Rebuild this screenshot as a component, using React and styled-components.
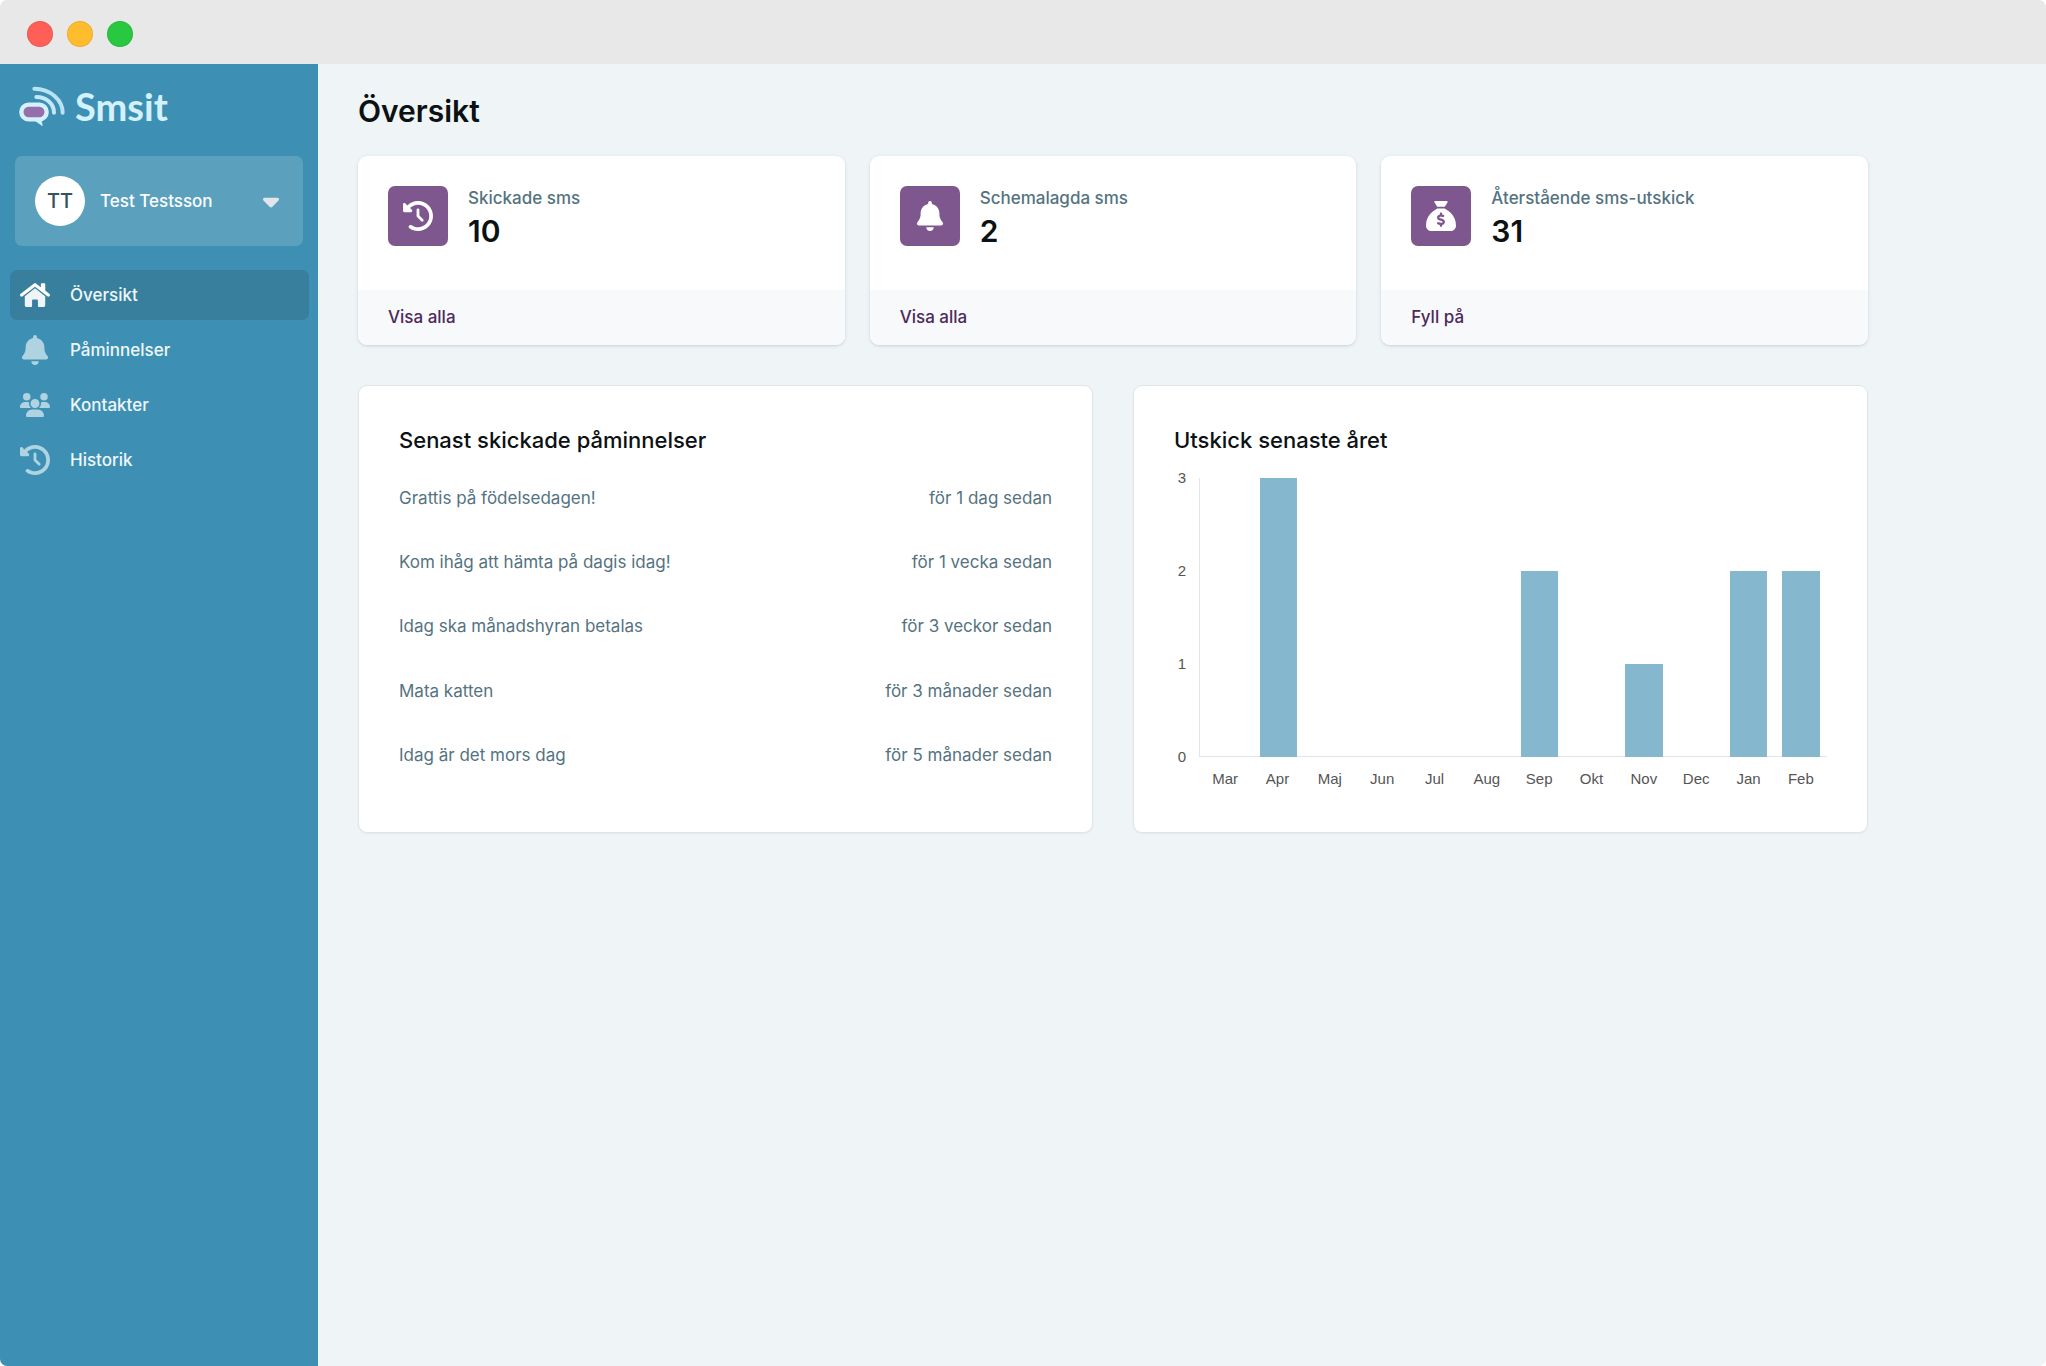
import React from "react";
import styled, { createGlobalStyle } from "styled-components";
import {
  FaBell,
  FaCaretDown,
  FaClockRotateLeft,
  FaSackDollar,
  FaUsers,
} from "react-icons/fa6";

const color = {
  chrome: "#e8e8e8",
  sidebar: "#3d90b3",
  sidebarActive: "#377f9d",
  account: "#5ba1be",
  page: "#eff4f7",
  purple: "#7f578f",
  link: "#4c2a5c",
  muted: "#54737f",
  heading: "#0c1113",
  bar: "#85b8ce",
  line: "#e0e5e9",
};

const GlobalStyle = createGlobalStyle`
  *, *::before, *::after { box-sizing: border-box; }
  body {
    margin: 0;
    background: #fff;
    font-family: Inter, "Liberation Sans", sans-serif;
    font-size: 17px;
    line-height: 25px;
  }
  h1, h2, p, ul, dl, dd { margin: 0; padding: 0; }
  ul { list-style: none; }
  a { color: inherit; text-decoration: none; }
  button { font: inherit; color: inherit; border: 0; cursor: pointer; }
`;

const Window = styled.div`
  display: flex;
  flex-direction: column;
  min-height: 100vh;
  border-radius: 7px;
  overflow: hidden;
`;

const TitleBar = styled.div`
  display: flex;
  gap: 15px;
  height: 64px;
  padding: 21px 27px 0;
  background: ${color.chrome};
`;

const WindowDot = styled.span`
  width: 26px;
  height: 26px;
  margin-right: -1px;
  border-radius: 50%;
  background: ${(p) => p.$color};
  box-shadow: inset 0 0 0 1px rgba(0, 0, 0, 0.08);
`;

const Body = styled.div`
  display: flex;
  flex: 1;
`;

const Sidebar = styled.aside`
  flex: none;
  width: 318px;
  background: ${color.sidebar};
  color: #eff7fa;
  font-weight: 500;
`;

const Brand = styled.a`
  display: flex;
  align-items: center;
  gap: 10px;
  height: 92px;
  padding: 0 19px 8px;
  color: #d3f1fe;
  font-family: Lato, "Open Sans", sans-serif;
  font-size: 38px;
  font-weight: 700;
  line-height: 40px;
`;

const Account = styled.button`
  display: flex;
  align-items: center;
  gap: 15px;
  width: calc(100% - 30px);
  height: 90px;
  margin: 0 15px;
  padding: 0 24px 0 20px;
  border-radius: 7px;
  background: ${color.account};
  && {
    color: #fff;
  }
  text-align: left;
`;

const Avatar = styled.span`
  display: grid;
  place-items: center;
  width: 50px;
  height: 50px;
  border-radius: 50%;
  background: #fff;
  color: #36525f;
  font-size: 20px;
`;

const AccountName = styled.span`
  flex: 1;
`;

const Caret = styled(FaCaretDown)`
  width: 16px;
  height: 26px;
  color: #e0e6ea;
`;

const NavList = styled.ul`
  display: grid;
  gap: 5px;
  padding: 24px 9px 24px 10px;
`;

const NavLink = styled.a`
  display: flex;
  align-items: center;
  gap: 20px;
  height: 50px;
  padding: 0 10px;
  border-radius: 7px;
  background: ${(p) => (p.$active ? color.sidebarActive : "transparent")};

  svg {
    width: 30px;
    height: 30px;
    color: ${(p) => (p.$active ? "#fff" : "#b0d3e1")};
  }
`;

const Main = styled.main`
  flex: 1;
  padding: 27px 40px 40px;
  background: ${color.page};
`;

const Content = styled.div`
  max-width: 1510px;
`;

const PageTitle = styled.h1`
  margin-bottom: 25px;
  color: ${color.heading};
  font-size: 30px;
  font-weight: 600;
  line-height: 40px;
`;

const StatGrid = styled.div`
  display: grid;
  grid-template-columns: repeat(3, 1fr);
  gap: 25px;
  margin-bottom: 40px;
`;

const StatCard = styled.section`
  border-radius: 9px;
  overflow: hidden;
  background: #fff;
  box-shadow: 0 1px 4px rgba(20, 50, 60, 0.1), 0 1px 2px rgba(20, 50, 60, 0.08);
`;

const StatBody = styled.div`
  display: flex;
  gap: 20px;
  padding: 30px 30px 39px;
`;

const StatIcon = styled.span`
  display: grid;
  place-items: center;
  width: 60px;
  height: 60px;
  border-radius: 7px;
  background: ${color.purple};
  color: #fff;

  svg {
    width: 30px;
    height: 30px;
  }
`;

const StatLabel = styled.dt`
  color: ${color.muted};
  font-weight: 500;
`;

const StatValue = styled.dd`
  color: ${color.heading};
  font-size: 30px;
  font-weight: 600;
  line-height: 40px;
`;

const StatFooter = styled.div`
  padding: 15px 30px;
  background: #f8f9fb;
  color: ${color.link};
  font-weight: 500;
`;

const PanelGrid = styled.div`
  display: grid;
  grid-template-columns: repeat(2, 1fr);
  gap: 40px;
`;

const Panel = styled.section`
  display: flex;
  flex-direction: column;
  padding: 40px 40px 44px;
  border: 1px solid ${color.line};
  border-radius: 9px;
  background: #fff;
  box-shadow: 0 1px 2px rgba(20, 50, 60, 0.05);
`;

const PanelTitle = styled.h2`
  color: ${color.heading};
  font-size: 22px;
  font-weight: 500;
  line-height: 28px;
`;

const ReminderList = styled.ul`
  display: grid;
  flex: 1;
  grid-auto-rows: 1fr;
  margin-top: 12px;
  color: ${color.muted};
`;

const Reminder = styled.li`
  display: flex;
  align-items: center;
  justify-content: space-between;
  gap: 20px;
`;

const Chart = styled.div`
  display: grid;
  grid-template-columns: 12px 1fr;
  column-gap: 13px;
  row-gap: 13px;
  margin-top: 24px;
  color: #555;
  font-family: "Liberation Sans", Arial, sans-serif;
  font-size: 15px;
  line-height: 18px;
`;

const YAxis = styled.div`
  display: flex;
  flex-direction: column;
  justify-content: space-between;
  margin: -9px 0;
  text-align: right;
`;

const Plot = styled.div`
  display: grid;
  grid-template-columns: repeat(12, 1fr);
  align-items: end;
  justify-items: center;
  height: 279px;
  border-left: 1px solid ${color.line};
  box-shadow: inset 0 -1px ${color.line};
`;

const Bar = styled.div`
  width: 72%;
  background: ${color.bar};
`;

const XAxis = styled.div`
  display: grid;
  grid-column: 2;
  grid-template-columns: repeat(12, 1fr);
  text-align: center;
`;

function BrandMark() {
  return (
    <svg width="46" height="40" viewBox="0 0 138 120" fill="none" aria-hidden="true">
      <path d="M46 8C94 8 131 42 131 80" stroke="#b9e2f3" strokeWidth="12" strokeLinecap="round" />
      <path d="M52 33C82 33 105 53 105 80" stroke="#c3e8f7" strokeWidth="12" strokeLinecap="round" />
      <path d="M40 98L66 98L70 119Z" fill="#d3f1fe" stroke="#d3f1fe" strokeWidth="2" strokeLinejoin="round" />
      <rect x="7" y="56" width="76" height="44" rx="22" fill="#956fa9" stroke="#d3f1fe" strokeWidth="13" />
    </svg>
  );
}

function HouseIcon() {
  return (
    <svg viewBox="0 0 576 512" fill="currentColor" aria-hidden="true">
      <path d="M401 150V46q0-18 18-18h48q18 0 18 18v170Z" />
      <path
        d="M32 258L288 58L544 258"
        fill="none"
        stroke="currentColor"
        strokeWidth="60"
        strokeLinecap="round"
        strokeLinejoin="round"
      />
      <path
        opacity="0.92"
        d="M288 126L484 280V456q0 28-28 28H362q-18 0-18-18V362q0-22-22-22H254q-22 0-22 22V466q0 18-18 18H120q-28 0-28-28V280Z"
      />
    </svg>
  );
}

const navItems = [
  { label: "Översikt", Icon: HouseIcon, active: true },
  { label: "Påminnelser", Icon: FaBell },
  { label: "Kontakter", Icon: FaUsers },
  { label: "Historik", Icon: FaClockRotateLeft },
];

const stats = [
  { label: "Skickade sms", value: 10, action: "Visa alla", Icon: FaClockRotateLeft },
  { label: "Schemalagda sms", value: 2, action: "Visa alla", Icon: FaBell },
  { label: "Återstående sms-utskick", value: 31, action: "Fyll på", Icon: FaSackDollar },
];

const reminders = [
  ["Grattis på födelsedagen!", "för 1 dag sedan"],
  ["Kom ihåg att hämta på dagis idag!", "för 1 vecka sedan"],
  ["Idag ska månadshyran betalas", "för 3 veckor sedan"],
  ["Mata katten", "för 3 månader sedan"],
  ["Idag är det mors dag", "för 5 månader sedan"],
];

const months = [
  ["Mar", 0],
  ["Apr", 3],
  ["Maj", 0],
  ["Jun", 0],
  ["Jul", 0],
  ["Aug", 0],
  ["Sep", 2],
  ["Okt", 0],
  ["Nov", 1],
  ["Dec", 0],
  ["Jan", 2],
  ["Feb", 2],
];

const maxCount = 3;

export default function App() {
  return (
    <>
      <GlobalStyle />
      <Window>
        <TitleBar>
          <WindowDot $color="#ff5f57" />
          <WindowDot $color="#ffbd2e" />
          <WindowDot $color="#28c840" />
        </TitleBar>
        <Body>
          <Sidebar>
            <Brand href="#">
              <BrandMark />
              <span>Smsit</span>
            </Brand>
            <Account type="button">
              <Avatar>TT</Avatar>
              <AccountName>Test Testsson</AccountName>
              <Caret aria-hidden="true" />
            </Account>
            <nav>
              <NavList>
                {navItems.map(({ label, Icon, active }) => (
                  <li key={label}>
                    <NavLink href="#" $active={active} aria-current={active ? "page" : undefined}>
                      <Icon />
                      {label}
                    </NavLink>
                  </li>
                ))}
              </NavList>
            </nav>
          </Sidebar>
          <Main>
            <Content>
              <PageTitle>Översikt</PageTitle>
              <StatGrid>
                {stats.map(({ label, value, action, Icon }) => (
                  <StatCard key={label}>
                    <StatBody>
                      <StatIcon>
                        <Icon />
                      </StatIcon>
                      <dl>
                        <StatLabel>{label}</StatLabel>
                        <StatValue>{value}</StatValue>
                      </dl>
                    </StatBody>
                    <StatFooter>
                      <a href="#">{action}</a>
                    </StatFooter>
                  </StatCard>
                ))}
              </StatGrid>
              <PanelGrid>
                <Panel>
                  <PanelTitle>Senast skickade påminnelser</PanelTitle>
                  <ReminderList>
                    {reminders.map(([text, when]) => (
                      <Reminder key={text}>
                        <span>{text}</span>
                        <span>{when}</span>
                      </Reminder>
                    ))}
                  </ReminderList>
                </Panel>
                <Panel>
                  <PanelTitle>Utskick senaste året</PanelTitle>
                  <Chart>
                    <YAxis>
                      {[3, 2, 1, 0].map((n) => (
                        <span key={n}>{n}</span>
                      ))}
                    </YAxis>
                    <Plot>
                      {months.map(([name, count]) => (
                        <Bar key={name} style={{ height: `${(count / maxCount) * 100}%` }} />
                      ))}
                    </Plot>
                    <XAxis>
                      {months.map(([name]) => (
                        <span key={name}>{name}</span>
                      ))}
                    </XAxis>
                  </Chart>
                </Panel>
              </PanelGrid>
            </Content>
          </Main>
        </Body>
      </Window>
    </>
  );
}
